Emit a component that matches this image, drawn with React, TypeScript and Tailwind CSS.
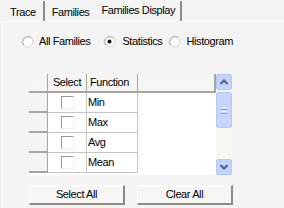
import React from 'react';

const rows = ['Min', 'Max', 'Avg', 'Mean'];

const Radio = ({ checked }: { checked?: boolean }) => (
  <svg width="13" height="13" viewBox="0 0 13 13" className="shrink-0">
    <circle cx="6.5" cy="6.5" r="5.5" fill="#ffffff" stroke="#d4d2c8" strokeWidth="1" />
    <path d="M2.5 10 A5.5 5.5 0 0 1 10 2.5" fill="none" stroke="#a9a89f" strokeWidth="1" />
    {checked && <circle cx="6.5" cy="6.5" r="2" fill="#111111" />}
  </svg>
);

const Check = () => (
  <div className="w-[13px] h-[13px] bg-white border-t border-l border-[#9c9a92] border-r-[#f0efe9] border-b-[#f0efe9] border-r border-b" />
);

const Tab = ({ label, active, sep }: { label: string; active?: boolean; sep?: boolean }) => (
  <div
    className={
      'flex items-center h-[20px] ' +
      (active ? 'px-[5px] pb-[2px] border-r-2 border-[#8e8c84]' : 'px-[7px] pt-[2px]') +
      (sep ? ' border-r-2 border-[#8e8c84]' : '')
    }
  >
    {label}
  </div>
);

export default function App() {
  return (
    <div
      className="w-[284px] h-[208px] bg-[#f4f4f4] overflow-hidden text-[11px] tracking-[-0.4px] text-black"
      style={{ fontFamily: '"Liberation Sans", Arial, sans-serif' }}
    >
      <div className="flex items-end h-[21px] pl-[3px]">
        <Tab label="Trace" sep />
        <Tab label="Families" />
        <Tab label="Families Display" active />
      </div>
      <div className="ml-[2px] border-t border-l border-white h-[187px] flex flex-col">
        <div className="flex items-center h-[13px] mt-[13px] ml-[18px]">
          <Radio />
          <span className="ml-[5px] mr-[13px]">All Families</span>
          <Radio checked />
          <span className="ml-[6px] mr-[6px]">Statistics</span>
          <Radio />
          <span className="ml-[5px]">Histogram</span>
        </div>
        <div className="flex mt-[26px] ml-[26px] h-[101px]">
          <div className="w-[187px] bg-white flex flex-col overflow-hidden">
            <div className="flex h-[19px] bg-[#f6f6f4]">
              <div className="w-[19px] border-r border-b-2 border-[#a8a59c]" />
              <div className="w-[39px] border-r border-b-2 border-[#a8a59c] flex items-center justify-center">Select</div>
              <div className="w-[51px] border-r border-b-2 border-[#a8a59c] flex items-center px-[3px]">Function</div>
              <div className="flex-1 border-r-2 border-b-2 border-[#a8a59c]" />
            </div>
            {rows.map((r) => (
              <div key={r} className="flex h-[20px] shrink-0">
                <div className="w-[19px] bg-[#f4f4f2] border-r border-b-2 border-[#a8a59c]" />
                <div className="w-[39px] border-r border-b border-[#c6c6c6] flex items-center justify-center">
                  <Check />
                </div>
                <div className="w-[51px] border-r border-b border-[#c6c6c6] flex items-center px-[1px]">{r}</div>
                <div className="flex-1" />
              </div>
            ))}
          </div>
          <div className="w-[16px] bg-[#f7f7f3] flex flex-col justify-between">
            <div className="flex flex-col gap-[2px]">
              <div className="h-[16px] rounded-[2px] bg-[#c3d3fd] border border-[#b3c7f8] flex items-center justify-center">
                <svg width="8" height="6" viewBox="0 0 8 6"><path d="M0.5 5 L4 1.5 L7.5 5" fill="none" stroke="#4d6185" strokeWidth="2" /></svg>
              </div>
              <div className="h-[36px] rounded-[2px] bg-[#c6d5fc] border border-[#b3c7f8] flex flex-col items-center justify-center gap-[1px]">
                <div className="w-[6px] h-px bg-[#eef3ff]" />
                <div className="w-[6px] h-px bg-[#8ca2d6]" />
                <div className="w-[6px] h-px bg-[#eef3ff]" />
                <div className="w-[6px] h-px bg-[#8ca2d6]" />
              </div>
            </div>
            <div className="h-[16px] rounded-[2px] bg-[#c3d3fd] border border-[#b3c7f8] flex items-center justify-center">
              <svg width="8" height="6" viewBox="0 0 8 6"><path d="M0.5 1 L4 4.5 L7.5 1" fill="none" stroke="#4d6185" strokeWidth="2" /></svg>
            </div>
          </div>
        </div>
        <div className="flex gap-[12px] ml-[26px] mt-[10px]">
          <button className="w-[96px] h-[20px] bg-[#f6f6f4] border-r-2 border-b-2 border-[#8e8b82] border-t border-l border-t-white border-l-white">Select All</button>
          <button className="w-[96px] h-[20px] bg-[#f6f6f4] border-r-2 border-b-2 border-[#8e8b82] border-t border-l border-t-white border-l-white">Clear All</button>
        </div>
      </div>
    </div>
  );
}
